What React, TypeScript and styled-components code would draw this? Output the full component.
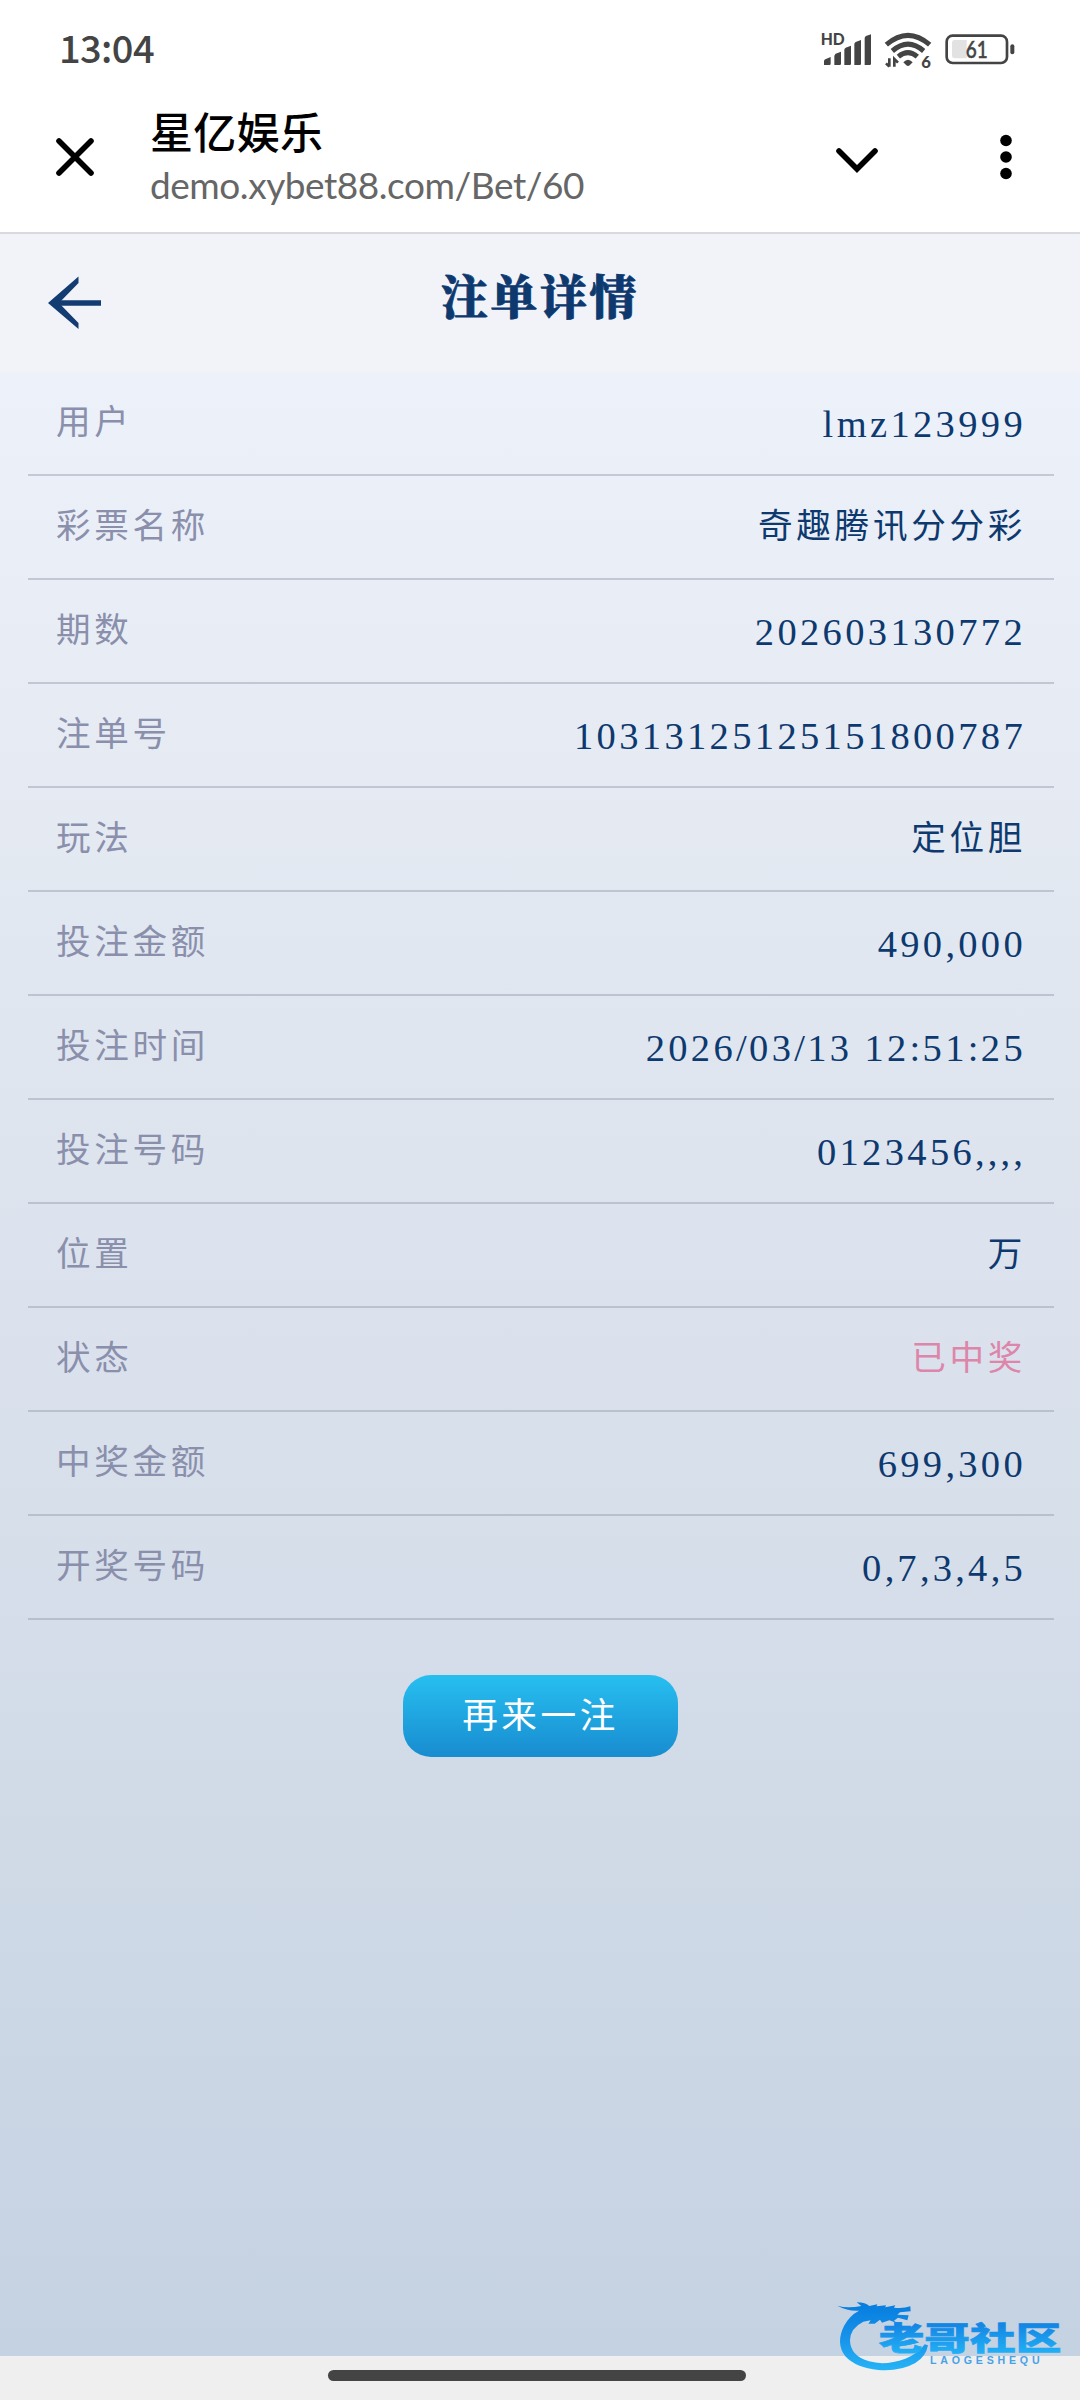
import React from "react";
import styled, { createGlobalStyle } from "styled-components";

const GlobalStyle = createGlobalStyle`
  html, body { margin: 0; padding: 0; }
  body { width: 1080px; background: #fff; font-family: "Noto Sans CJK SC", sans-serif; }
  * { box-sizing: border-box; }
`;

const Screen = styled.div`
  position: relative;
  width: 1080px;
  height: 2400px;
  display: flex;
  flex-direction: column;
  overflow: hidden;
`;

const StatusBar = styled.div`
  height: 100px;
  padding: 0 59px;
  display: flex;
  align-items: center;
  justify-content: space-between;
`;

const Clock = styled.span`
  font: 500 38px/40px "Noto Sans CJK SC", sans-serif;
  letter-spacing: -0.6px;
  color: #444;
  margin-top: -7px;
`;

const StatusIcons = styled.div`
  display: flex;
  gap: 10px;
  margin-right: 6px;
  margin-top: -3px;
`;

const BrowserBar = styled.div`
  height: 134px;
  padding: 0 59px 0 52px;
  display: grid;
  grid-template-columns: 98px 1fr 48px 140px;
  border-bottom: 2px solid #d8dae0;
`;

const IconButton = styled.button<{ $end?: boolean }>`
  height: 114px;
  padding: 0;
  border: 0;
  background: none;
  display: flex;
  align-items: center;
  justify-content: ${(p) => (p.$end ? "flex-end" : "flex-start")};
`;

const PageInfo = styled.div`
  display: flex;
  flex-direction: column;
`;

const PageName = styled.span`
  font: 500 43px/60px "Noto Sans CJK SC", sans-serif;
  letter-spacing: 0.3px;
  color: #000;
`;

const PageUrl = styled.span`
  font: 400 37px/44px Lato, sans-serif;
  letter-spacing: -0.45px;
  color: #666;
  margin-top: 3px;
  white-space: nowrap;
`;

const Header = styled.header`
  height: 138px;
  padding: 0 47px;
  display: grid;
  grid-template-columns: 60px 1fr 60px;
  background: #f1f3f9;
  color: #0d396f;
`;

const BackArrow = styled.svg`
  margin-top: 23px;
`;

const Title = styled.h1`
  margin: 0;
  padding: 26px 0 0 0;
  font: 900 47px/68px "Noto Serif CJK SC", "Noto Serif SC", "Noto Sans CJK SC", serif;
  letter-spacing: 2.6px;
  text-align: center;
  -webkit-text-stroke: 0.8px #0d396f;
`;

const Body = styled.main`
  flex: 1;
  padding: 0 26px 0 28px;
  display: flex;
  flex-direction: column;
  align-items: center;
  background: linear-gradient(
    #edf1fa,
    #e6ebf3 20%,
    #e2e8f1 27%,
    #dbe2ed 47%,
    #d4dde9 64%,
    #c5d2e2
  );
`;

const Details = styled.dl`
  margin: 0;
  width: 100%;
`;

const Row = styled.div`
  height: 104px;
  padding: 0 28px;
  display: flex;
  align-items: center;
  justify-content: space-between;
  border-bottom: 2px solid rgba(150, 158, 176, 0.48);
`;

const Label = styled.dt`
  font: 400 34.6px/50px "Noto Sans CJK SC", sans-serif;
  letter-spacing: 3.7px;
  color: #8a8fac;
  margin-top: -8px;
`;

const Value = styled.dd<{ $numeric?: boolean; $won?: boolean }>`
  margin: ${(p) => (p.$numeric ? "1px 0 0" : "-8px 0 0")};
  font: ${(p) =>
    p.$numeric
      ? '400 38.5px/50px "Liberation Serif", serif'
      : '400 34.6px/50px "Noto Sans CJK SC", sans-serif'};
  letter-spacing: ${(p) => (p.$numeric ? "3.35px" : "3.7px")};
  white-space: pre;
  color: ${(p) => (p.$won ? "#dd86aa" : "#0d396f")};
`;

const Separator = styled.span<{ $comma: boolean }>`
  letter-spacing: ${(p) => (p.$comma ? "3.1px" : "2.3px")};
`;

const BetAgain = styled.button`
  width: 275px;
  height: 82px;
  margin: 55px 1px 0 0;
  padding: 0 0 6px 0;
  border: 0;
  border-radius: 28px;
  background: linear-gradient(#27bff0, #188cd0);
  color: #fff;
  font: 400 35.6px/50px "Noto Sans CJK SC", sans-serif;
  letter-spacing: 3.6px;
`;

const NavBar = styled.div`
  height: 44px;
  padding: 14px 6px 0 0;
  display: flex;
  justify-content: center;
  background: #efefef;
`;

const HomeHandle = styled.div`
  width: 418px;
  height: 11px;
  border-radius: 6px;
  background: #444;
`;

const Watermark = styled.svg`
  position: absolute;
  right: 0;
  bottom: 0;
  width: 280px;
  height: 130px;
`;

type Entry = { label: string; value: string; numeric?: boolean; won?: boolean };

const entries: Entry[] = [
  { label: "用户", value: "lmz123999", numeric: true },
  { label: "彩票名称", value: "奇趣腾讯分分彩" },
  { label: "期数", value: "202603130772", numeric: true },
  { label: "注单号", value: "10313125125151800787", numeric: true },
  { label: "玩法", value: "定位胆" },
  { label: "投注金额", value: "490,000", numeric: true },
  { label: "投注时间", value: "2026/03/13 12:51:25", numeric: true },
  { label: "投注号码", value: "0123456,,,,", numeric: true },
  { label: "位置", value: "万" },
  { label: "状态", value: "已中奖", won: true },
  { label: "中奖金额", value: "699,300", numeric: true },
  { label: "开奖号码", value: "0,7,3,4,5", numeric: true },
];

// Separators are set a little tighter than the digits around them.
const spaced = (value: string) =>
  value.split(/([,:/ ]+)/).map((part, i) =>
    i % 2 ? (
      <Separator key={i} $comma={part.startsWith(",")}>
        {part}
      </Separator>
    ) : (
      part
    )
  );

const SignalIcon = () => (
  <svg width="56" height="44" viewBox="116 80 168 132" fill="#444">
    <text x="124" y="135" fontFamily="Lato" fontWeight="900" fontSize="48" textLength="72" lengthAdjust="spacingAndGlyphs">HD</text>
    <path d="M134 194V183Q134 179 138 177L154 170V190Q154 194 150 194ZM165 194V168Q165 163 169 160L185 154V190Q185 194 181 194ZM195 194V149Q195 145 199 142L215 136V190Q215 194 211 194ZM225 194V132Q225 128 229 125L245 119V190Q245 194 241 194ZM256 194V114Q256 110 260 107L275 102V190Q275 194 271 194Z" />
  </svg>
);

const WifiIcon = () => (
  <svg width="50" height="44" viewBox="312 80 150 132" fill="none" stroke="#444" strokeWidth="15">
    <path d="M319 133Q384 77 449 133M337 152Q384 111 431 152M355 169Q384 145 412 169" />
    <path d="M370 186Q384 170 398 186L389 195Q384 199 379 195Z" fill="#444" stroke="none" />
    <path d="M328 174V199M318 189L328 199M343 199V176L354 187" strokeWidth="8" />
    <text x="424" y="202" fontFamily="Lato" fontWeight="900" fontSize="50" fill="#444" stroke="none">6</text>
  </svg>
);

const BatteryIcon = () => (
  <svg width="71" height="44" viewBox="494 80 213 132">
    <rect x="502" y="106" width="181" height="82" rx="18" fill="none" stroke="#444" strokeWidth="8" />
    <path d="M562 119H526Q518 119 518 128V165Q518 174 526 174H562Z" fill="#e2e2e2" />
    <rect x="693" y="132" width="12" height="30" rx="6" fill="#444" />
    <text x="592" y="173" textAnchor="middle" fontFamily="Lato" fontWeight="500" fontSize="69" textLength="66" lengthAdjust="spacingAndGlyphs" fill="#444" stroke="#444" strokeWidth="1.5">61</text>
  </svg>
);

const CommunityMark = () => (
  <Watermark viewBox="0 0 840 390">
    <defs>
      <linearGradient id="mark" gradientUnits="userSpaceOnUse" x1="0" y1="110" x2="0" y2="300">
        <stop offset="0" stopColor="#087fe0" />
        <stop offset="0.5" stopColor="#1793ea" />
        <stop offset="1" stopColor="#26b4f6" />
      </linearGradient>
      <linearGradient id="word" gradientUnits="userSpaceOnUse" x1="0" y1="165" x2="0" y2="250">
        <stop offset="0" stopColor="#1486e4" />
        <stop offset="1" stopColor="#22b0f5" />
      </linearGradient>
    </defs>
    <path
      fill="url(#mark)"
      d="M112 107Q142 116 184 108L170 97Q198 98 208 108L232 103L230 109L258 106L256 112L286 106L282 113Q310 116 331 109L332 124L300 127L292 134L326 136L322 151L294 143L282 152L292 160L268 151L246 158L240 149L224 161L205 161L212 151L190 155Q151 174 150 211Q151 258 207 274Q256 288 316 266Q355 251 374 223L384 226Q378 260 346 279Q300 305 235 300Q168 294 136 259Q106 220 132 168Q148 137 177 122Q146 125 112 107Z"
    />
    <text x="236" y="241" fontFamily="Noto Sans CJK SC" fontWeight="900" fontSize="94" textLength="548" lengthAdjust="spacingAndGlyphs" fill="url(#word)" stroke="url(#word)" strokeWidth="2">老哥社区</text>
    <text x="390" y="283" fontFamily="Liberation Sans" fontWeight="700" fontSize="31" letterSpacing="11" textLength="340" lengthAdjust="spacingAndGlyphs" fill="#4aa2e6">LAOGESHEQU</text>
  </Watermark>
);

export default function App() {
  return (
    <Screen>
      <GlobalStyle />
      <StatusBar>
        <Clock>13:04</Clock>
        <StatusIcons>
          <SignalIcon />
          <WifiIcon />
          <BatteryIcon />
        </StatusIcons>
      </StatusBar>
      <BrowserBar>
        <IconButton aria-label="关闭">
          <svg width="46" height="46" viewBox="0 0 46 46" stroke="#000" strokeWidth="5.6" strokeLinecap="round">
            <path d="M7 7L39 39M39 7L7 39" />
          </svg>
        </IconButton>
        <PageInfo>
          <PageName>星亿娱乐</PageName>
          <PageUrl>demo.xybet88.com/Bet/60</PageUrl>
        </PageInfo>
        <IconButton aria-label="展开">
          <svg width="48" height="40" viewBox="0 0 48 40" fill="none" stroke="#000" strokeWidth="5.6" strokeLinecap="round">
            <path d="M6 14L24 32L42 14" />
          </svg>
        </IconButton>
        <IconButton $end aria-label="更多">
          <svg width="30" height="50" viewBox="0 0 30 50">
            <circle cx="15" cy="8.5" r="5.8" />
            <circle cx="15" cy="25" r="5.8" />
            <circle cx="15" cy="41.5" r="5.8" />
          </svg>
        </IconButton>
      </BrowserBar>
      <Header>
        <IconButton aria-label="返回">
          <BackArrow width="60" height="60" viewBox="0 0 60 60">
            <path d="M31.5 3.5V10L12 30L31.5 50V56L1 30Z" fill="#123c72" />
            <path d="M5 30H54" stroke="#123c72" strokeWidth="5.6" />
          </BackArrow>
        </IconButton>
        <Title>注单详情</Title>
      </Header>
      <Body>
        <Details>
          {entries.map((e) => (
            <Row key={e.label}>
              <Label>{e.label}</Label>
              <Value $numeric={e.numeric} $won={e.won}>
                {spaced(e.value)}
              </Value>
            </Row>
          ))}
        </Details>
        <BetAgain>再来一注</BetAgain>
      </Body>
      <NavBar>
        <HomeHandle />
      </NavBar>
      <CommunityMark />
    </Screen>
  );
}
